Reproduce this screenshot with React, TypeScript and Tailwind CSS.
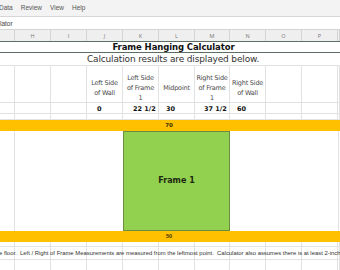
import React from 'react';

const cols = ['', 'H', 'I', 'J', 'K', 'L', 'M', 'N', 'O', 'P', ''];
const grid = 'grid grid-cols-[15px_36px_36px_36px_36px_36px_35px_36px_36px_36px_1fr]';

const labels = [
  { col: 3, lines: ['Left Side', 'of Wall'], value: '0', pad: 'pl-[10px]' },
  { col: 4, lines: ['Left Side', 'of Frame', '1'], value: '22 1/2', pad: 'pl-[10px]' },
  { col: 5, lines: ['Midpoint'], value: '30', pad: 'pl-[7px]' },
  { col: 6, lines: ['Right Side', 'of Frame', '1'], value: '37 1/2', pad: 'pl-[9px]' },
  { col: 7, lines: ['Right Side', 'of Wall'], value: '60', pad: 'pl-[7px]' },
];

function GridRow({ h, children }: { h: string; children?: (i: number) => React.ReactNode }) {
  return (
    <div className={`${grid} ${h} border-b border-[#e2e2e2]`}>
      {cols.map((_, i) => (
        <div key={i} className="border-r border-[#e2e2e2] min-w-0 overflow-visible">
          {children ? children(i) : null}
        </div>
      ))}
    </div>
  );
}

export default function App() {
  const findLabel = (i: number) => labels.find((l) => l.col === i);

  return (
    <div className="w-[340px] h-[270px] overflow-hidden bg-white font-['Open_Sans',sans-serif] text-[#333]">
      {/* ribbon menu */}
      <div className="h-[17px] bg-[#f3f3f3] border-b border-[#d6d6d6] flex items-center gap-[8px] text-[6.5px] text-[#555] font-['Liberation_Sans',sans-serif] -ml-[1px]">
        <span>Data</span>
        <span>Review</span>
        <span>View</span>
        <span>Help</span>
      </div>

      {/* formula bar */}
      <div className="h-[13px] bg-white border-b border-[#d4d4d4] flex items-center pt-[2px] text-[6.5px] text-[#444] font-['Liberation_Sans',sans-serif]">
        <span>lator</span>
      </div>

      {/* column headers */}
      <div className={`${grid} h-[11px] bg-[#efefef]`}>
        {cols.map((c, i) => (
          <div key={i} className="border-r border-[#d4d4d4] flex items-center justify-center pt-[1px] text-[5.5px] text-[#777]">
            {c}
          </div>
        ))}
      </div>

      {/* title */}
      <div className="h-[12px] border-y border-[#5c6f64] flex items-center justify-center pl-[7px] text-[8.5px] font-bold text-[#111] font-['DejaVu_Sans',sans-serif] tracking-[-0.1px]">
        Frame Hanging Calculator
      </div>

      {/* subtitle */}
      <div className="h-[13px] border-b border-[#e2e2e2] flex items-center justify-center pl-[6px] pt-[1px] text-[9px] text-[#333] font-['DejaVu_Sans',sans-serif] tracking-[-0.15px]">
        Calculation results are displayed below.
      </div>

      {/* labels */}
      <GridRow h="h-[37px]">
        {(i) => {
          const l = findLabel(i);
          if (!l) return null;
          return (
            <div className="h-full flex flex-col items-center justify-center pt-[7px] text-[6.5px] leading-[10px] text-[#4a4a4a] font-['DejaVu_Sans',sans-serif] text-center tracking-[-0.2px]">
              {l.lines.map((t) => (
                <span key={t} className="whitespace-nowrap">{t}</span>
              ))}
            </div>
          );
        }}
      </GridRow>

      {/* values */}
      <GridRow h="h-[11px]">
        {(i) => {
          const l = findLabel(i);
          if (!l) return null;
          return (
            <div className={`h-full flex items-center ${l.pad} pt-[1px] text-[6.5px] leading-[8px] font-bold text-[#111] font-['DejaVu_Sans',sans-serif]`}>
              {l.value}
            </div>
          );
        }}
      </GridRow>

      <GridRow h="h-[6px]" />

      {/* wall top */}
      <div className="h-[11px] bg-[#ffc000] flex items-center justify-center pr-[2px] text-[5.5px] font-bold text-[#3a3000] font-['DejaVu_Sans',sans-serif]">
        70
      </div>

      {/* frame area */}
      <div className={`${grid} h-[100px]`}>
        <div className="border-r border-[#e2e2e2]" />
        <div className="col-span-3" />
        <div className="col-span-3 bg-[#92d050] border border-[#6b8e3e] flex items-center justify-center text-[8px] font-bold text-[#1d2a10] font-['DejaVu_Sans',sans-serif]">
          Frame 1
        </div>
        <div className="col-span-3" />
        <div className="border-l border-[#e2e2e2]" />
      </div>

      {/* wall bottom */}
      <div className="h-[11px] bg-[#ffc000] flex items-center justify-center pr-[2px] text-[5.5px] font-bold text-[#3a3000] font-['Liberation_Sans',sans-serif]">
        50
      </div>

      <GridRow h="h-[5px]" />
      <div className="relative">
        <GridRow h="h-[13px]" />
        <div className="absolute inset-0 flex items-center whitespace-nowrap text-[5.9px] text-[#333] font-['Liberation_Sans',sans-serif] -ml-[1px]">
          e floor.&nbsp; Left / Right of Frame Measurements are measured from the leftmost point.&nbsp; Calculator also assumes there is at least 2-inch
        </div>
      </div>
      <GridRow h="h-[12px]" />
    </div>
  );
}
